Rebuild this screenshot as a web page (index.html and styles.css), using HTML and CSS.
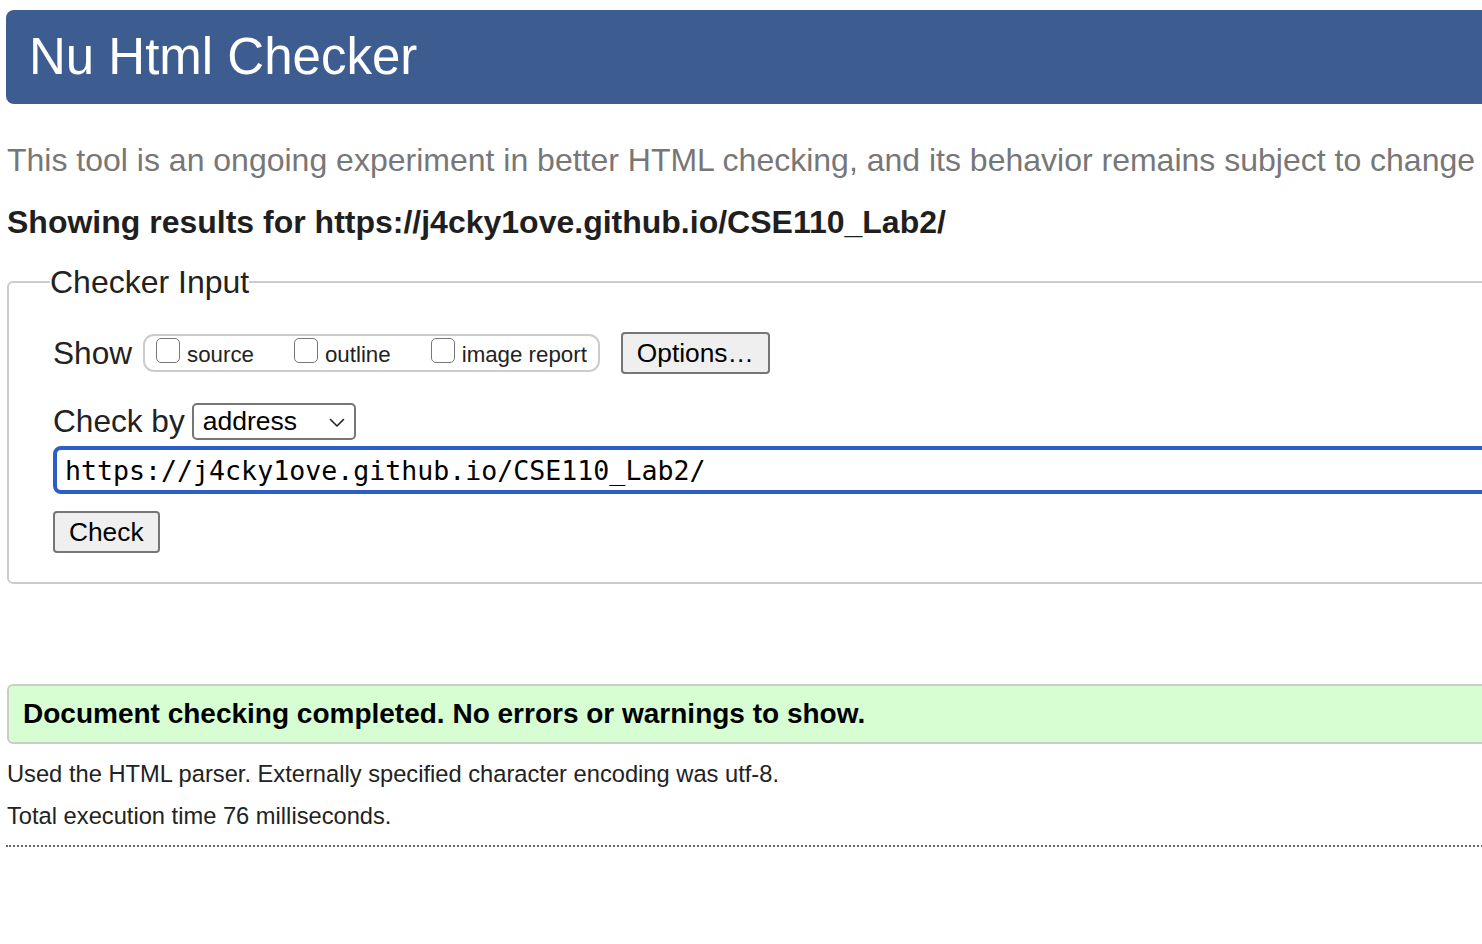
FILE: index.html
```html
<!DOCTYPE html>
<html lang="en">
<head>
<meta charset="utf-8">
<title>Nu Html Checker</title>
<link rel="stylesheet" href="styles.css">
</head>
<body>
<div class="page">
  <h1 class="banner">Nu Html Checker</h1>
  <p class="intro">This tool is an ongoing experiment in better HTML checking, and its behavior remains subject to change</p>
  <p class="results">Showing results for https://j4cky1ove.github.io/CSE110_Lab2/</p>
  <fieldset class="input-box">
    <legend class="legend">Checker Input</legend>
    <div class="row show-row">
      <span class="lbl">Show</span>
      <div class="opts">
        <span class="opt"><span class="cb"></span><span class="opt-text">source</span></span>
        <span class="opt"><span class="cb"></span><span class="opt-text">outline</span></span>
        <span class="opt"><span class="cb"></span><span class="opt-text">image report</span></span>
      </div>
      <span class="btn options-btn">Options…</span>
    </div>
    <div class="row by-row">
      <span class="lbl">Check by</span>
      <span class="select">address
        <svg class="chev" width="16" height="10" viewBox="0 0 16 10"><path d="M1.5 1.5 L8 8 L14.5 1.5" fill="none" stroke="#222" stroke-width="1.6" stroke-linecap="round" stroke-linejoin="round"/></svg>
      </span>
    </div>
    <div class="url">https://j4cky1ove.github.io/CSE110_Lab2/</div>
    <span class="btn check-btn">Check</span>
  </fieldset>
  <div class="success">Document checking completed. No errors or warnings to show.</div>
  <p class="info first">Used the HTML parser. Externally specified character encoding was utf-8.</p>
  <p class="info">Total execution time 76 milliseconds.</p>
  <div class="dotted"></div>
</div>
</body>
</html>
```

FILE: styles.css
```css
html, body {
  margin: 0;
  padding: 0;
  background: #ffffff;
  overflow: hidden;
}

body {
  font-family: "Liberation Sans", Arial, sans-serif;
  color: #222222;
}

.page {
  width: 1600px;
  padding-left: 6px;
  padding-top: 10px;
}

.banner {
  margin: 0;
  height: 94px;
  line-height: 94px;
  background: #3d5c90;
  color: #ffffff;
  font-weight: normal;
  font-size: 51px;
  padding-left: 23px;
  border-radius: 8px 0 0 8px;
}

.intro {
  margin: 38px 0 0 1px;
  font-size: 32px;
  line-height: 36px;
  color: #777777;
  white-space: nowrap;
}

.results {
  margin: 26px 0 0 1px;
  font-size: 32px;
  font-weight: bold;
  line-height: 36px;
  color: #1f1f22;
  white-space: nowrap;
}

.input-box {
  margin: 24px 0 0 1px;
  border: 2px solid #cccccc;
  border-radius: 6px;
  padding: 32px 0 29px 44px;
  min-width: 0;
}

.legend {
  margin-left: -3px;
  padding: 0;
  font-size: 32px;
  line-height: 36px;
  color: #222222;
}

.row {
  display: flex;
  align-items: center;
}

.show-row {
  height: 42px;
}

.lbl {
  font-size: 31.6px;
  color: #222222;
  white-space: nowrap;
}

.opts {
  display: flex;
  align-items: center;
  height: 34px;
  margin-left: 11px;
  padding: 0 11px 0 11px;
  border: 2px solid #cccccc;
  border-radius: 11px;
  gap: 40px;
}

.opt {
  display: flex;
  align-items: center;
  gap: 7px;
}

.cb {
  width: 22px;
  height: 23px;
  border: 1.5px solid #767676;
  border-radius: 5px;
  margin-top: -5px;
  background: #ffffff;
}

.opt-text {
  font-size: 22.3px;
  color: #222222;
  margin-top: 3px;
}

.btn {
  display: inline-flex;
  align-items: center;
  box-sizing: border-box;
  height: 42px;
  border: 2px solid #767676;
  border-radius: 4px;
  background: #efefef;
  color: #000000;
  font-size: 26.3px;
  padding: 0 14px;
}

.options-btn {
  margin-left: 21px;
  width: 149px;
}

.by-row {
  margin-top: 29px;
  height: 37px;
}

.select {
  display: inline-flex;
  align-items: center;
  justify-content: space-between;
  box-sizing: border-box;
  margin-left: 7px;
  width: 164px;
  height: 37px;
  border: 2px solid #767676;
  border-radius: 5px;
  padding: 0 9px 0 9px;
  font-size: 26.5px;
  color: #000000;
}

.chev {
  display: block;
  margin-top: 2px;
}

.url {
  box-sizing: border-box;
  margin-top: 6px;
  height: 48px;
  border: 4px solid #2b5ec8;
  border-radius: 8px;
  padding-left: 8px;
  display: flex;
  align-items: center;
  font-family: "DejaVu Sans Mono", "Liberation Mono", monospace;
  font-size: 26.6px;
  color: #000000;
}

.check-btn {
  margin-top: 17px;
  width: 107px;
  padding: 0 14px;
}

.success {
  margin: 100px 0 0 1px;
  box-sizing: border-box;
  height: 60px;
  border: 2px solid #cccccc;
  border-radius: 6px;
  background: #d7fdd2;
  padding-left: 14px;
  display: flex;
  align-items: center;
  font-weight: bold;
  font-size: 28px;
  color: #000000;
}

.info {
  margin: 0 0 0 1px;
  font-size: 23.7px;
  line-height: 42px;
  color: #222222;
  white-space: nowrap;
}

.info.first {
  margin-top: 9px;
}

.dotted {
  margin-top: 8px;
  border-top: 2px dotted #6a6a6a;
}
```
